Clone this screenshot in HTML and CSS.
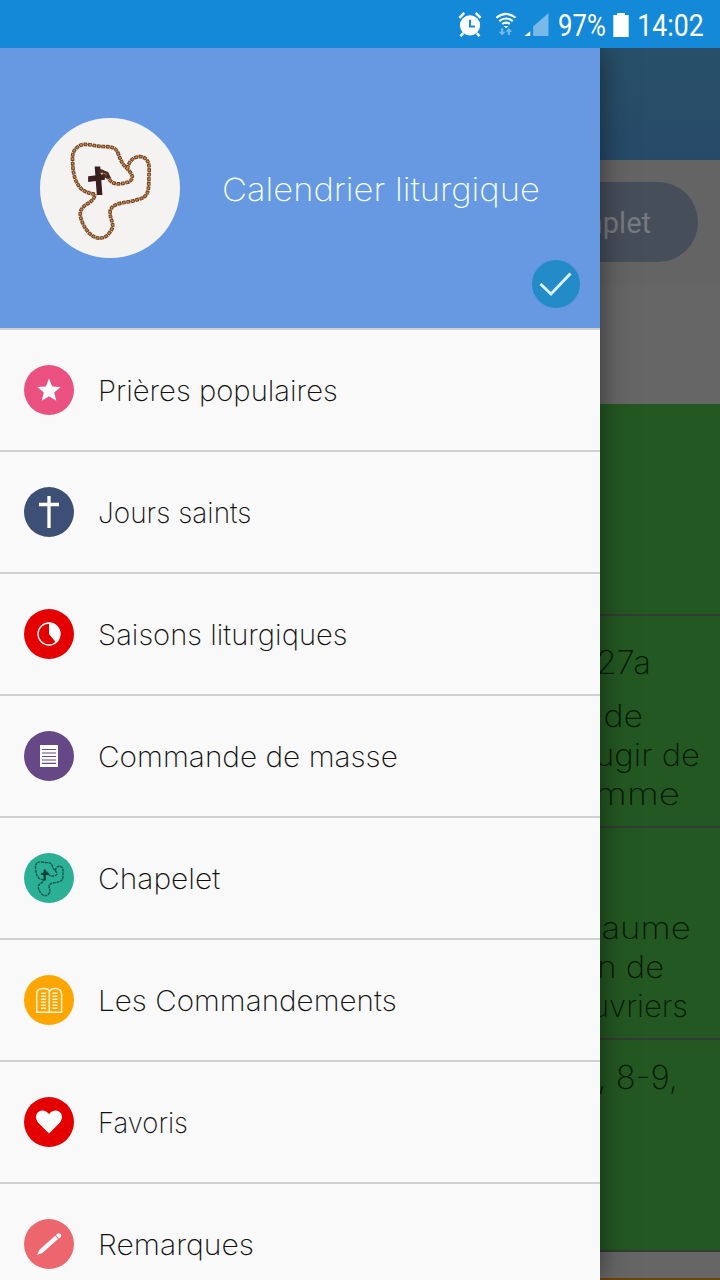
FILE: index.html
```
<!DOCTYPE html>
<html lang="fr">
<head>
  <meta charset="UTF-8">
  <meta name="viewport" content="width=device-width, initial-scale=1.0">
  <title>Calendrier liturgique</title>
  <link rel="stylesheet" href="styles.css">
</head>
<body>
  <!-- shared rosary outline -->
  <svg class="defs" width="0" height="0">
    <defs>
      <path id="beads" d="M66 83C58 82 52 79 49 73C45 67 44 58 44 50C43 42 46 38 51 35C57 32 66 36 74 36C82 36 86 37 88 41C91 48 92 53 98 58C102 63 106 67 99 71C91 73 84 75 79 67Q76 62 72 60M98 58C99 50 105 45 112 46C122 49 119 60 119 70C119 82 117 86 109 88C99 92 84 90 81 99C80 109 87 112 81 120C76 128 67 128 61 122C54 115 50 104 52 99C56 91 65 92 66 83"/>
    </defs>
  </svg>

  <header class="status">
    <svg class="alarm" viewBox="0 0 24 26" width="24" height="26">
      <path d="M1 6L6 1M23 6L18 1M5 22L2 25M19 22l3 3" stroke="#fff" stroke-width="2.6"/>
      <circle cx="12" cy="14" r="10.5" fill="#fff"/>
      <path d="M12 8v7h5" fill="none" stroke="#1389d8" stroke-width="2"/>
    </svg>
    <svg class="wifi" viewBox="0 0 22 26" width="22" height="26">
      <g fill="none" stroke="#fff" stroke-width="2.2">
        <path d="M1 6Q11 -2 21 6M4 9.500Q11 4 18 9.500M7 12.500Q11 9.500 15 12.500"/>
      </g>
      <path d="M8.500 14.500h5L11 17z" fill="#fff"/>
      <path d="M7 17v5M14 24v-5" stroke="#78b9ea" stroke-width="2.200"/>
      <path d="M3.500 20.500h7L7 24.500zM10.500 20.500h7L14 16.500z" fill="#78b9ea"/>
    </svg>
    <svg class="signal" viewBox="0 0 25 24" width="25" height="24">
      <path d="M9 24V14L25 0v24z" fill="#78b9ea"/>
      <path d="M0 24l6-5v5z" fill="#fff"/>
    </svg>
    <span class="percent">97%</span>
    <svg class="battery" viewBox="0 0 16 25" width="16" height="25"><path d="M0 2h4V0h8v2h4v23H0z" fill="#fff"/></svg>
    <span class="clock">14:02</span>
  </header>

  <div class="app">
    <main class="page">
      <div class="topbar"></div>
      <div class="tabs"><div class="pill">mplet</div></div>
      <div class="blank"></div>
      <div class="reading"></div>
      <div class="reading r1">
        <div class="ref">27a</div>
        <p class="l1"><span>de</span></p>
        <p class="l2"><span>ugir de</span></p>
        <p class="l3"><span>mme</span></p>
      </div>
      <div class="reading r2">
        <p class="l4"><span>aume</span></p>
        <p class="l5"><span>n de</span></p>
        <p class="l6"><span>uvriers</span></p>
      </div>
      <div class="reading r3">
        <div class="ref">, 8-9,</div>
      </div>
      <div class="gap"></div>
      <div class="next"></div>
    </main>

    <nav class="drawer">
      <div class="profile">
        <svg class="avatar" viewBox="0 0 140 140" width="140" height="140">
          <circle cx="70" cy="70" r="70" fill="#f4f3f2"/>
          <g transform="translate(-12 -8) scale(1.015)" fill="none">
            <use href="#beads" stroke="#777" stroke-width="1"/>
            <use href="#beads" stroke="#70401f" stroke-width="3.600" stroke-dasharray="3.600 .8"/>
            <use href="#beads" stroke="#d08a45" stroke-width="1.800" stroke-dasharray="1.800 2.600" stroke-dashoffset="-1"/>
            <path d="M66.500 56.500h4l2 26.500h-4zM60 66l15-2v4l-15 2z" fill="#3b1f20" stroke="#3b1f20" stroke-width="1.500"/>
            <path d="M70 59l8 3 2 4-6-1" stroke="#4b291e" stroke-width="2.500"/>
          </g>
        </svg>
        <h1>Calendrier liturgique</h1>
        <svg class="check" viewBox="0 0 48 48" width="48" height="48">
          <circle cx="24" cy="24" r="24" fill="#238bc8"/>
          <path d="M8.500 24L19 34 38.500 13.500" fill="none" stroke="#d9f1fb" stroke-width="3"/>
        </svg>
      </div>

      <ul class="menu">
        <li class="prieres">
          <svg viewBox="0 0 50 50"><circle cx="25" cy="25" r="25" fill="#ea5080"/>
            <path d="M25 13.500l3.200 7.900 8.500.5-6.500 5.500 2.100 8.300L25 31.200l-7.300 4.500 2.100-8.300-6.500-5.500 8.500-.5z" fill="#fff"/></svg>
          <span>Prières populaires</span>
        </li>
        <li class="jours">
          <svg viewBox="0 0 50 50"><circle cx="25" cy="25" r="25" fill="#3d4f75"/>
            <path d="M25 9v32M15 17.500h20" stroke="#fff" stroke-width="3.300"/></svg>
          <span>Jours saints</span>
        </li>
        <li class="saisons">
          <svg viewBox="0 0 50 50"><circle cx="25" cy="25" r="25" fill="#e40000"/>
            <circle cx="25" cy="25" r="11" fill="none" stroke="#fff" stroke-width="1.300"/>
            <path d="M25 25V14a11 11 0 0 1 7 19.500z" fill="#fff"/></svg>
          <span>Saisons liturgiques</span>
        </li>
        <li class="masse">
          <svg viewBox="0 0 50 50"><circle cx="25" cy="25" r="25" fill="#664887"/>
            <path d="M16 14h18v22H16z" fill="#fff"/>
            <path d="M18 18.500h14M18 22h14M18 25.500h14M18 29h14M18 32.300h14" stroke="#664887" stroke-width="1.200"/></svg>
          <span>Commande de masse</span>
        </li>
        <li class="chapelet">
          <svg viewBox="0 0 50 50"><circle cx="25" cy="25" r="25" fill="#2bb095"/>
            <g transform="translate(-4.500 -3.500) scale(.365)" fill="none" stroke="#12554b">
              <use href="#beads" stroke-width="3.800" stroke-dasharray="8 2"/>
              <path d="M69 55v30M59 67h21" stroke="#073c35" stroke-width="6"/>
            </g></svg>
          <span>Chapelet</span>
        </li>
        <li class="lois">
          <svg viewBox="0 0 50 50"><circle cx="25" cy="25" r="25" fill="#fea500"/>
            <g fill="none" stroke="#fff4d5" stroke-width="1.500">
              <path d="M12.700 37.300V19Q12.700 13.500 19 13.500T25.300 17V37.300zM25.300 37.300V17Q26 13.500 31.500 13.500T37.600 19V37.300z"/>
              <path d="M17 18.300h5M17 21.300h5M17 24.300h5M17 27.300h5M17 30.300h5M17 33.300h5M28.500 18.300h5M28.500 21.300h5M28.500 24.300h5M28.500 27.300h5M28.500 30.300h5M28.500 33.300h5"/>
            </g></svg>
          <span>Les Commandements</span>
        </li>
        <li class="favoris">
          <svg viewBox="0 0 50 50"><circle cx="25" cy="25" r="25" fill="#e40000"/>
            <path d="M25 36.500L15.500 27C12 23.500 11.300 20 12.700 17 15 12.500 21.500 12 25 17.300 28.500 12 35 12.500 37.300 17 38.700 20 38 23.500 34.500 27z" fill="#fff"/></svg>
          <span>Favoris</span>
        </li>
        <li class="remarques">
          <svg viewBox="0 0 50 50"><circle cx="25" cy="25" r="25" fill="#ed666d"/>
            <path d="M13 36l2.400-5.200L31.200 16.700l2.900 3.200L18.300 34z" fill="#fff"/>
            <path d="M32 16l1-1.300q2-1.200 3.600.4 1.300 1.900 0 3.400L35 19.500z" fill="#fff"/></svg>
          <span>Remarques</span>
        </li>
      </ul>
    </nav>
  </div>
</body>
</html>
```
FILE: styles.css
```
* { box-sizing: border-box; }
body { margin: 0; height: 1280px; overflow: hidden; font-family: Inter, "Open Sans", sans-serif; font-weight: 200; background: #666; }
h1, p, ul { margin: 0; padding: 0; }
.defs { position: absolute; }

/* status bar */
.status { height: 48px; display: flex; align-items: center; justify-content: flex-end; padding-right: 16px; background: #1389d8; color: #fff; font-family: Roboto, sans-serif; font-weight: 400; font-size: 31px; white-space: nowrap; }
.status svg { flex: none; padding-top: 1px; }
.alarm { margin-right: 13px; }
.wifi { margin-right: 7px; }
.signal { margin-right: 9px; }
.status span { display: inline-flex; justify-content: center; padding-top: 3px; }
.percent { width: 48px; transform: scaleX(.83); }
.battery { margin: 0 8px 0 7px; }
.clock { width: 67px; transform: scaleX(.86); }

/* dimmed page behind the drawer */
.app { position: relative; height: 1232px; overflow: hidden; }
.page { height: 1232px; color: #061b04; text-align: right; }
.topbar { height: 112px; background: linear-gradient(#28506a, #274a68); }
.tabs { height: 125px; padding: 22px 22px 0 0; display: flex; justify-content: flex-end; background: #646464; }
.pill { width: 300px; height: 80px; padding-right: 47px; border-radius: 40px; background: #464e5a; color: #777b80; font: 400 29px/83px Roboto, sans-serif; }
.blank { height: 119px; background: #666; }
.reading { height: 212px; background: #245822; border-bottom: 2px solid #333b32; font-size: 31px; }
.reading p { line-height: 39px; }
.reading span { display: inline-block; transform: scaleX(1.06); transform-origin: right; }
.ref { font-size: 33px; line-height: 44px; }
.r1 { padding-top: 24px; }
.r1 .ref { padding-right: 69px; margin-bottom: 12px; }
.r2 { padding-top: 80px; }
.r3 { padding-top: 15px; }
.r3 .ref { padding-right: 42px; }
.l1 { padding-right: 77px; }
.l2 { padding-right: 20px; }
.l3 { padding-right: 40px; }
.l4 { padding-right: 29px; }
.l5 { padding-right: 56px; }
.l6 { padding-right: 32px; }
.reading .l1 span { transform: scaleX(1.1); }
.reading .l3 span { transform: scaleX(1.18); }
.reading .l4 span { transform: scaleX(1.12); }
.reading .l6 span { transform: none; }
.gap { height: 26px; background: #666; }
.next { height: 2px; background: #6b4509; }

/* drawer */
.drawer { position: absolute; top: 0; left: 0; width: 600px; height: 1232px; background: #f9f9f9; box-shadow: 0 0 28px rgba(0, 0, 0, .5); }
.profile { height: 282px; display: flex; align-items: center; padding: 0 20px 0 40px; background: #6699e2; border-bottom: 2px solid #d0d0d0; }
.profile svg { flex: none; }
.profile h1 { width: 310px; margin-left: 42px; padding-top: 3px; font-size: 32px; font-weight: 200; line-height: 40px; white-space: nowrap; color: #f2ffff; transform: scaleX(1.078); transform-origin: left; }
.check { align-self: flex-end; margin-bottom: 20px; }
.menu { list-style: none; }
.menu li { height: 122px; display: flex; align-items: center; gap: 24px; padding-left: 24px; border-bottom: 2px solid #d0d0d0; font-size: 28px; color: #111; }
.menu svg { width: 50px; height: 50px; flex: none; }
.menu span { padding-top: 1px; white-space: nowrap; transform-origin: left; }
/* label widths */
.prieres span { transform: scaleX(1.044); }
.saisons span { transform: scaleX(1.042); }
.masse span { transform: scaleX(1.064); }
.chapelet span { transform: scaleX(1.07); }
.lois span { transform: scaleX(1.06); }
.favoris span { transform: scaleX(.98); }
.remarques span { transform: scaleX(1.076); }
```
